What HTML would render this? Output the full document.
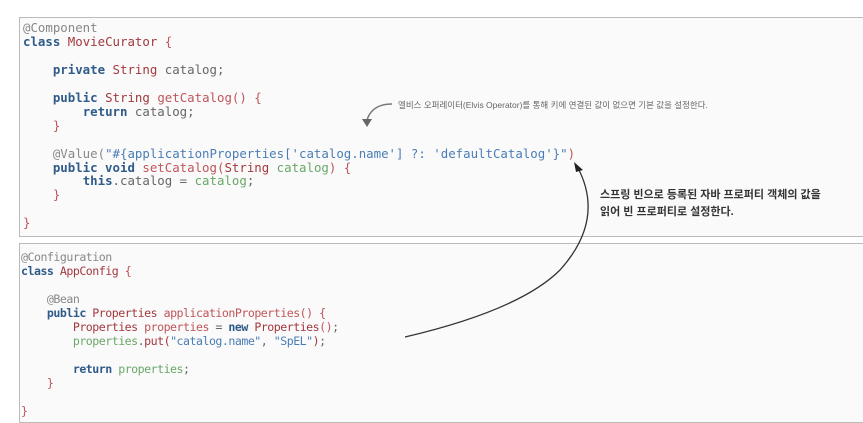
<!DOCTYPE html>
<html><head><meta charset="utf-8"><style>
body{margin:0;width:863px;height:415px;background:#fff;position:relative;overflow:hidden;font-family:"DejaVu Sans Mono","Liberation Mono",monospace}
.box{position:absolute;left:19px;width:860px;background:#fafafa;border:1.5px solid #bbb;box-sizing:border-box}
pre{margin:0;position:absolute;font-family:"DejaVu Sans Mono","Liberation Mono",monospace;font-size:12.4px;line-height:13.95px;color:#666}
.k{color:#2f5b8a;font-weight:bold}.t{color:#a3383e}.s{color:#4a7db5}.g{color:#6aa768}.a{color:#888}.r{color:#c0555a}
.ko{position:absolute;font-family:"Liberation Sans","Noto Sans CJK KR",sans-serif;color:#333}
</style></head><body>
<div class="box" style="top:17px;height:220px"></div>
<div class="box" style="top:243px;height:180px"></div>
<pre style="left:23px;top:21px"><span class="a">@Component</span>
<span class="k">class</span> <span class="t">MovieCurator</span> <span class="r">{</span>

    <span class="k">private</span> <span class="t">String</span> catalog;

    <span class="k">public</span> <span class="t">String</span> <span class="r">getCatalog() {</span>
        <span class="k">return</span> catalog;
    <span class="r">}</span>

    <span class="a">@Value(</span><span class="s">"#{applicationProperties['catalog.name'] ?: 'defaultCatalog'}"</span><span class="r">)</span>
    <span class="k">public void</span> <span class="r">setCatalog(</span><span class="t">String</span> <span class="g">catalog</span><span class="r">) {</span>
        <span class="k">this</span>.catalog = <span class="g">catalog</span>;
    <span class="r">}</span>

<span class="r">}</span></pre>
<pre style="left:21px;top:250px;font-size:11.6px;letter-spacing:-0.5px;line-height:14px"><span class="a">@Configuration</span>
<span class="k">class</span> <span class="t">AppConfig</span> <span class="r">{</span>

    <span class="a">@Bean</span>
    <span class="k">public</span> <span class="t">Properties</span> <span class="r">applicationProperties() {</span>
        <span class="t">Properties</span> <span class="r">properties</span> = <span class="k">new</span> <span class="t">Properties</span><span class="r">()</span>;
        <span class="g">properties</span>.<span class="t">put(</span><span class="s">"catalog.name"</span>, <span class="s">"SpEL"</span><span class="t">)</span>;

        <span class="k">return</span> <span class="g">properties</span>;
    <span class="r">}</span>

<span class="r">}</span></pre>
<div class="ko" style="left:398px;top:99px;font-size:8.5px;color:#666">엘비스 오퍼레이터(Elvis Operator)를 통해 키에 연결된 값이 없으면 기본 값을 설정한다.</div>
<div class="ko" style="left:600px;top:187px;font-size:11px;line-height:17px;font-weight:bold">스프링 빈으로 등록된 자바 프로퍼티 객체의 값을<br>읽어 빈 프로퍼티로 설정한다.</div>
<svg width="863" height="415" style="position:absolute;left:0;top:0">
<path d="M392 104 Q372 104 367 120" fill="none" stroke="#777" stroke-width="1.5"/>
<path d="M362 119 L372 119 L367 127 Z" fill="#666"/>
<path d="M405 337 Q520 310 560 270 Q605 220 578 168" fill="none" stroke="#333" stroke-width="1.3"/>
<path d="M574 162 L583 170 L576 172 Z" fill="#222"/>
</svg>
</body></html>
